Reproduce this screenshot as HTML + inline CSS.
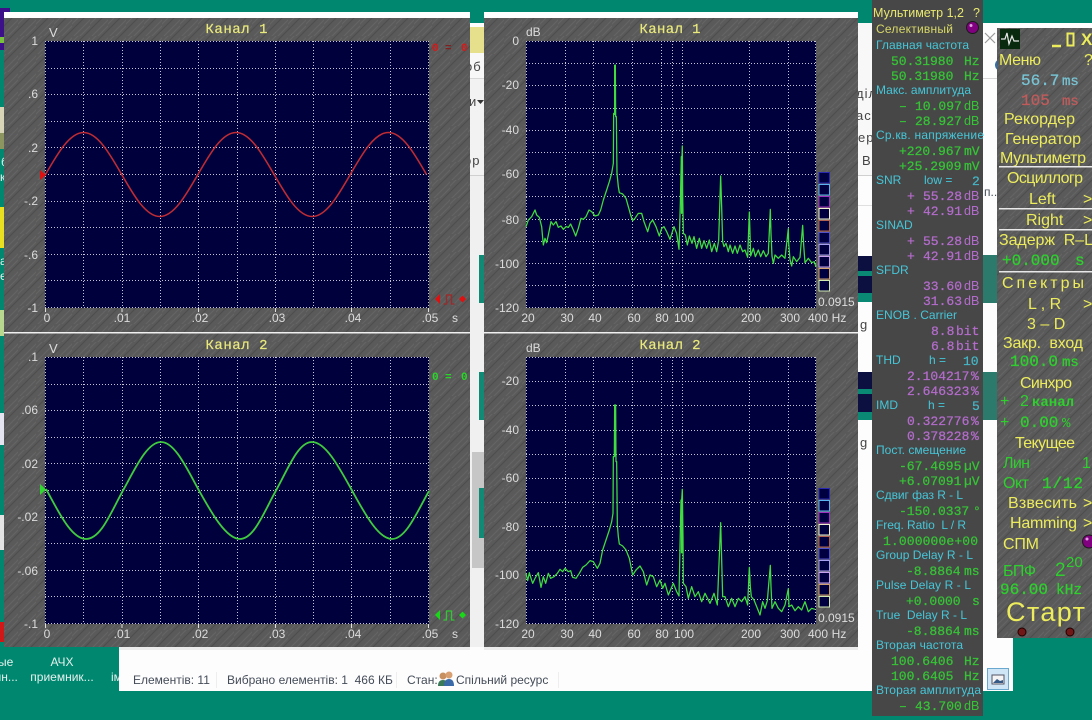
<!DOCTYPE html>
<html><head><meta charset="utf-8"><style>
html,body{margin:0;padding:0;background:#00876f;width:1092px;height:720px;overflow:hidden}
svg{display:block}
text{font-family:"Liberation Sans","DejaVu Sans",sans-serif;white-space:pre}
.m{font-family:"Liberation Mono",monospace}
.ax{font-size:12px;fill:#dcdcdc}
.tt{font-family:"Liberation Mono",monospace;font-size:14px;fill:#eaea7c;stroke:#eaea7c;stroke-width:.2}
.l{font-size:12px;fill:#45c6d8}
.g{font-family:"Liberation Mono",monospace;font-size:13px;fill:#36c436;stroke:#36c436;stroke-width:.25}
.gu{font-size:12.5px;fill:#36c436}
.p{font-family:"Liberation Mono",monospace;font-size:13px;fill:#b46ccc;stroke:#b46ccc;stroke-width:.25}
.pu{font-size:12.5px;fill:#b46ccc}
.c{font-family:"Liberation Mono",monospace;font-size:13px;fill:#45b8c8;stroke:#45b8c8;stroke-width:.2}
.y{font-size:16px;fill:#ecec5c}
.gr{font-size:16px;fill:#2ed02e}
.grm{font-family:"Liberation Mono",monospace;font-size:16px;fill:#2ed02e;stroke:#2ed02e;stroke-width:.3}
.e{font-size:13px;fill:#444}
.s{font-size:12px;fill:#444c58}
.d{font-size:12px;fill:#e4f0ee}
</style></head><body>
<svg width="1092" height="720" viewBox="0 0 1092 720" xmlns="http://www.w3.org/2000/svg">
<defs>
<pattern id="t" width="18" height="18" patternUnits="userSpaceOnUse">
<rect width="18" height="18" fill="#5a5a5a"/>
<path d="M-2 8L8 -2M0 20L20 0M5 21L21 5" stroke="#656565" stroke-width="1"/>
<path d="M-2 14L14 -2M10 20L20 10" stroke="#4e4e4e" stroke-width="1.200"/>
</pattern>
<g id="tg" fill="none" stroke="#c4c4d4" stroke-width="1" stroke-dasharray="1 2">
<path d="M83.500 41V308M122.500 41V308M160.500 41V308M198.500 41V308M237.500 41V308M275.500 41V308M313.500 41V308M351.500 41V308M390.500 41V308M45.500 41V308M428.500 41V308"/>
<path d="M45 41.500H429M45 68.500H429M45 94.500H429M45 121.500H429M45 147.500H429M45 174.500H429M45 201.500H429M45 227.500H429M45 254.500H429M45 280.500H429M45 307.500H429"/>
</g>
<g id="fv" fill="none" stroke="#c4c4d4" stroke-width="1" stroke-dasharray="1 2">
<path d="M526.500 0V267M565.500 0V267M593.500 0V267M632.500 0V267M661.500 0V267M672.500 0V267M682.500 0V267M749.500 0V267M788.500 0V267M815.500 0V267"/>
</g>
<g id="sw" fill="#000040" stroke-width="1">
<rect x="819" y="0" width="10.500" height="10.500" stroke="#2828b0"/>
<rect x="819" y="12" width="10.500" height="10.500" stroke="#5ab4f0"/>
<rect x="819" y="24" width="10.500" height="10.500" stroke="#a030c0"/>
<rect x="819" y="36" width="10.500" height="10.500" stroke="#f0f0d0"/>
<rect x="819" y="48" width="10.500" height="10.500" stroke="#b06050"/>
<rect x="819" y="60" width="10.500" height="10.500" stroke="#5050c8"/>
<rect x="819" y="72" width="10.500" height="10.500" stroke="#a8a0f0"/>
<rect x="819" y="84" width="10.500" height="10.500" stroke="#c8a0f0"/>
<rect x="819" y="96" width="10.500" height="10.500" stroke="#d0a070"/>
<rect x="819" y="108" width="10.500" height="10.500" stroke="#d0e8b0"/>
</g>
</defs>

<!-- desktop -->
<rect width="1092" height="720" fill="#00876f"/>
<rect x="0" y="8" width="10" height="42" fill="#3c1088"/>
<rect x="0" y="37" width="4" height="6" fill="#7ac040"/>
<rect x="0" y="107" width="4" height="26" fill="#d8d4b8"/>
<rect x="0" y="133" width="4" height="16" fill="#8c9460"/>
<rect x="0" y="207" width="4" height="41" fill="#e8e020"/>
<rect x="0" y="310" width="4" height="26" fill="#b8d890"/>
<rect x="0" y="413" width="4" height="32" fill="#e4e4f0"/>
<rect x="0" y="515" width="4" height="35" fill="#e4e4e4"/>
<rect x="0" y="622" width="4" height="20" fill="#d01818"/>
<text class="d" x="1" y="166">б</text>
<text class="d" x="0" y="181">к</text>
<text class="d" x="0" y="265">а</text>
<text class="d" x="0" y="280">ет</text>
<text class="d" x="-2" y="666">ые</text>
<text class="d" x="-5" y="681">чн...</text>
<text class="d" x="62" y="666" text-anchor="middle">АЧХ</text>
<text class="d" x="62" y="681" text-anchor="middle">приемник...</text>
<text class="d" x="111" y="681">ім</text>

<!-- explorer window -->
<rect x="119" y="23" width="894" height="668" fill="#fdfdfd"/>
<rect x="466" y="27" width="20" height="26" fill="#e6e08c"/>
<rect x="466" y="53" width="20" height="25" fill="#f8f8f8"/>
<rect x="466" y="78" width="420" height="1" fill="#d8d8d8"/>
<rect x="466" y="79" width="20" height="98" fill="#f2f2f2"/>
<rect x="856" y="23" width="20" height="152" fill="#f8f8f8"/>
<rect x="466" y="175" width="420" height="1" fill="#d0d0d0"/>
<rect x="466" y="205" width="420" height="1" fill="#e0e0e0"/>
<rect x="466" y="176" width="20" height="471" fill="#f0f0f0"/>
<rect x="472" y="452" width="14" height="116" fill="#c6c6c6"/>
<text class="e" x="465" y="71" style="font-size:13px;letter-spacing:1px">об</text>
<text class="e" x="469" y="106">и</text>
<path d="M477 100h7l-3.500 4z" fill="#333"/>
<text class="e" x="464" y="165" style="letter-spacing:1px">ор</text>
<text class="e" x="856" y="98" style="letter-spacing:1px">діл</text>
<text class="e" x="856" y="120" style="letter-spacing:1px">асу</text>
<text class="e" x="858" y="142" style="letter-spacing:1px">ер</text>
<text class="e" x="862" y="165" style="letter-spacing:1px">Ви</text>
<text class="e" x="860" y="329">g</text>
<text class="e" x="860" y="447">g</text>
<rect x="479" y="255" width="6" height="48" fill="#108a74"/>
<rect x="479" y="372" width="6" height="48" fill="#108a74"/>
<rect x="479" y="488" width="6" height="50" fill="#108a74"/>
<rect x="858" y="256" width="14" height="46" fill="#0a8a74"/>
<rect x="858" y="256" width="14" height="15" fill="#0c1040"/>
<rect x="858" y="276" width="14" height="17" fill="#0c1040"/>
<rect x="858" y="372" width="14" height="48" fill="#0a8a74"/>
<rect x="858" y="372" width="14" height="17" fill="#0c1040"/>
<rect x="858" y="394" width="14" height="18" fill="#0c1040"/>
<rect x="982" y="255" width="16" height="48" fill="#2c7a6c"/>
<rect x="982" y="372" width="16" height="48" fill="#2c7a6c"/>
<rect x="983" y="78" width="16" height="1" fill="#d8d8d8"/>
<path d="M985 33L995 43M995 33L985 43" stroke="#9a9a9a" stroke-width="1.200"/>
<circle cx="1001" cy="65" r="6" fill="#2a70b8"/>
<text class="s" x="984" y="196">п...</text>
<rect x="119" y="647" width="351" height="3" fill="#ececec"/>
<rect x="484" y="647" width="374" height="3" fill="#ececec"/>
<!-- status bar -->
<text class="s" x="133" y="684">Елементів: 11</text>
<text class="s" x="227" y="684">Вибрано елементів: 1  466 КБ</text>
<text class="s" x="407" y="684">Стан:</text>
<circle cx="443" cy="676" r="3.500" fill="#c89060"/>
<path d="M438 686q0-6 5-6t5 6z" fill="#3a7a58"/>
<circle cx="449" cy="675" r="3.500" fill="#d8a070"/>
<path d="M444 686q0-7 5-7t5 7z" fill="#3a6aa8"/>
<text class="s" x="456" y="684">Спільний ресурс</text>
<rect x="216" y="672" width="1" height="16" fill="#eee"/>
<rect x="396" y="672" width="1" height="16" fill="#eee"/>
<rect x="558" y="672" width="1" height="16" fill="#eee"/>
<rect x="987.500" y="668.500" width="21" height="21" fill="#cfe6f6" stroke="#6aa8d0"/>
<rect x="992" y="675" width="12" height="9" fill="#f4f4f4" stroke="#556"/>
<path d="M993 683l4-4 3 2 3-1v3z" fill="#345a88"/>

<!-- scope left windows -->
<rect x="4" y="12" width="466" height="6" fill="#fff"/>
<rect x="4" y="18" width="466" height="629" fill="url(#t)"/>
<rect x="4" y="332" width="466" height="1.500" fill="#f0f0f0"/>
<rect x="45" y="41" width="384" height="267" fill="#00003c"/>
<rect x="45" y="357" width="384" height="267" fill="#00003c"/>
<use href="#tg"/>
<use href="#tg" y="316"/>
<text class="tt" x="205.500" y="33" textLength="62">Канал 1</text>
<text class="tt" x="205.500" y="349" textLength="62">Канал 2</text>
<path d="M45.500 174.500c12.400-21.500 24.300-42 38.100-42s25.700 20.500 38.100 42 24.300 42 38.100 42 25.700-20.500 38.100-42 24.300-42 38.100-42 25.700 20.500 38.100 42 24.300 42 38.100 42 25.700-20.500 38.100-42 24.300-42 38.100-42 25.700 20.500 38.100 42" fill="none" stroke="#c02c34" stroke-width="1.600"/>
<path d="M46 489c12 21.500 25 50 40 50s25-27 37-48.500 24-48.500 38-48.500 26 27 38 48.500 27 48.500 41 48.500 24-27 36-48.500 22-48.500 36-48.500 28 27 40 48.500 26 48.500 40 48.500 25-27 37-48" fill="none" stroke="#40cc40" stroke-width="1.800"/>
<path d="M40 170l6 5-6 5z" fill="#e01010"/>
<path d="M40 484l6 5.500-6 5.500z" fill="#30d830"/>
<g class="ax">
<text class="ax" x="49" y="37" style="font-size:13px">V</text>
<text class="ax" x="49" y="353" style="font-size:13px">V</text>
<g text-anchor="end">
<text class="ax" x="38" y="45">1</text><text class="ax" x="38" y="98">.6</text><text class="ax" x="38" y="152">.2</text><text class="ax" x="38" y="205">-.2</text><text class="ax" x="38" y="259">-.6</text><text class="ax" x="38" y="312">-1</text>
<text class="ax" x="38" y="361">.1</text><text class="ax" x="38" y="414">.06</text><text class="ax" x="38" y="468">.02</text><text class="ax" x="38" y="521">-.02</text><text class="ax" x="38" y="575">-.06</text><text class="ax" x="38" y="628">-.1</text>
</g>
<g text-anchor="middle">
<text class="ax" x="47" y="322">0</text><text class="ax" x="122" y="322">.01</text><text class="ax" x="200" y="322">.02</text><text class="ax" x="277" y="322">.03</text><text class="ax" x="353" y="322">.04</text><text class="ax" x="430" y="322">.05</text><text class="ax" x="455" y="322">s</text>
<text class="ax" x="47" y="638">0</text><text class="ax" x="122" y="638">.01</text><text class="ax" x="200" y="638">.02</text><text class="ax" x="277" y="638">.03</text><text class="ax" x="353" y="638">.04</text><text class="ax" x="430" y="638">.05</text><text class="ax" x="455" y="638">s</text>
</g></g>
<path d="M45.500 308v4M122 308v4M198.500 308v4M275.500 308v4M351.500 308v4M428.500 308v4M45.500 624v4M122 624v4M198.500 624v4M275.500 624v4M351.500 624v4M428.500 624v4" stroke="#ddd"/>
<!-- red/green markers -->
<text class="m" x="432" y="51" fill="#d81818" style="font-size:11px;font-weight:bold">0</text><text class="m" x="445" y="51" fill="#802020" style="font-size:11px;font-weight:bold">=</text><text class="m" x="461" y="51" fill="#d81818" style="font-size:11px;font-weight:bold">0</text>
<text class="m" x="432" y="380" fill="#28d828" style="font-size:11px;font-weight:bold">0</text><text class="m" x="445" y="380" fill="#28d828" style="font-size:11px;font-weight:bold">=</text><text class="m" x="461" y="380" fill="#28d828" style="font-size:11px;font-weight:bold">0</text>
<g fill="#e01010"><path d="M435 299l5-5v10z"/><path d="M459 299l3.500-3.500 3.500 3.500-3.500 3.500z"/></g>
<path d="M443.500 304h3v-9h5v9h3" fill="none" stroke="#a02828" stroke-width="1.300"/>
<g fill="#18d818"><path d="M435 615l5-5v10z"/><path d="M459 615l3.500-3.500 3.500 3.500-3.500 3.500z"/></g>
<path d="M443.500 620h3v-9h5v9h3" fill="none" stroke="#30c830" stroke-width="1.300"/>

<!-- spectrum windows -->
<rect x="484" y="12" width="374" height="6" fill="#fff"/>
<rect x="484" y="18" width="374" height="629" fill="url(#t)"/>
<rect x="484" y="332" width="374" height="1.500" fill="#f0f0f0"/>
<rect x="526" y="41" width="290" height="267" fill="#00003c"/>
<rect x="526" y="357" width="290" height="267" fill="#00003c"/>
<use href="#fv" y="41"/>
<use href="#fv" y="357"/>
<path d="M526 63.500H816M526 85.500H816M526 108.500H816M526 130.500H816M526 152.500H816M526 174.500H816M526 196.500H816M526 219.500H816M526 241.500H816M526 263.500H816M526 285.500H816M526 41.500H816M526 307.500H816" fill="none" stroke="#c4c4d4" stroke-dasharray="1 2"/>
<path d="M526 357.500H816M526 381.500H816M526 405.500H816M526 430.500H816M526 454.500H816M526 478.500H816M526 502.500H816M526 526.500H816M526 550.500H816M526 575.500H816M526 599.500H816M526 623.500H816" fill="none" stroke="#c4c4d4" stroke-dasharray="1 2"/>
<text class="tt" x="639.500" y="33" textLength="61">Канал 1</text>
<text class="tt" x="639.500" y="349" textLength="61">Канал 2</text>
<text class="ax" x="526" y="36">dB</text>
<text class="ax" x="526" y="352">dB</text>
<g text-anchor="end">
<text class="ax" x="519" y="45">0</text><text class="ax" x="519" y="89">-20</text><text class="ax" x="519" y="134">-40</text><text class="ax" x="519" y="178">-60</text><text class="ax" x="519" y="224">-80</text><text class="ax" x="519" y="268">-100</text><text class="ax" x="519" y="312">-120</text>
<text class="ax" x="519" y="385">-20</text><text class="ax" x="519" y="434">-40</text><text class="ax" x="519" y="482">-60</text><text class="ax" x="519" y="531">-80</text><text class="ax" x="519" y="579">-100</text><text class="ax" x="519" y="628">-120</text>
</g>
<g text-anchor="middle">
<text class="ax" x="528" y="322">20</text><text class="ax" x="567" y="322">30</text><text class="ax" x="595" y="322">40</text><text class="ax" x="634" y="322">60</text><text class="ax" x="662" y="322">80</text><text class="ax" x="684" y="322">100</text><text class="ax" x="751" y="322">200</text><text class="ax" x="790" y="322">300</text><text class="ax" x="818" y="322">400</text><text class="ax" x="839" y="322">Hz</text>
<text class="ax" x="528" y="638">20</text><text class="ax" x="567" y="638">30</text><text class="ax" x="595" y="638">40</text><text class="ax" x="634" y="638">60</text><text class="ax" x="662" y="638">80</text><text class="ax" x="684" y="638">100</text><text class="ax" x="751" y="638">200</text><text class="ax" x="790" y="638">300</text><text class="ax" x="818" y="638">400</text><text class="ax" x="839" y="638">Hz</text>
</g>
<text class="ax" x="818" y="306">0.0915</text>
<text class="ax" x="818" y="622">0.0915</text>
<use href="#sw" y="172.500"/>
<use href="#sw" y="488.500"/>

<g transform="translate(480,0) scale(.33333)" fill="none" stroke="#40dc40" stroke-width="3.800" stroke-linejoin="round">
<polyline points="138,680 145,660 155,650 165,630 170,645 178,652 185,680 190,735 195,715 200,728 205,705 213,665 220,675 228,665 235,682 243,678 250,688 258,680 265,682 272,672 280,690 287,708 295,685 303,655 310,658 318,650 327,630 335,635 345,648 355,645 362,630 370,600 380,570 388,545 395,520 400,490 401,340 404,340 405,195 406,195 407,350 409,350 411,520 415,560 418,578 428,582 438,595 445,620 452,645 458,662 465,655 475,640 485,640 492,665 503,695 510,670 518,660 528,680 538,708 545,685 552,680 560,695 570,718 582,680 590,700 597,748 601,610 604,470 605,640 606,470 607,438 608,580 610,700 616,705 622,735 628,708 636,730 642,710 650,745 658,715 665,745 672,722 680,745 688,720 695,755 703,730 710,755 716,722 722,528 725,622 728,725 732,740 738,730 745,755 750,735 758,760 765,738 772,760 780,735 788,755 795,750 803,772 808,636 810,700 812,768 820,745 826,770 835,750 842,770 850,752 858,770 865,760 871,628 873,700 876,768 880,790 885,765 895,775 905,765 915,775 925,686 926,730 930,778 935,798 940,770 950,785 960,772 968,676 971,735 975,788 985,775 995,788 1003,785 1008,800"/>
<path d="M405 195V345" stroke-width="6"/>
<path d="M605 470V640" stroke-width="5"/>
</g>
<g transform="translate(480,330) scale(.33333)" fill="none" stroke="#40dc40" stroke-width="3.800" stroke-linejoin="round">
<polyline points="138,730 143,752 148,728 153,745 158,760 165,745 175,728 183,772 190,740 197,760 205,730 212,745 222,740 232,730 240,718 248,725 255,715 265,725 272,722 278,742 288,745 298,730 308,712 318,705 330,692 340,695 352,715 360,700 368,660 378,630 388,600 395,575 399,550 400,380 403,380 404,225 407,225 408,395 410,395 412,585 415,620 418,642 428,648 438,660 448,685 458,735 468,720 480,708 490,725 500,765 510,735 520,740 530,770 540,750 548,775 555,760 565,795 580,760 590,785 597,798 600,650 603,510 605,510 607,478 609,620 610,760 618,770 625,805 635,770 645,800 655,785 665,815 675,790 690,820 702,790 712,825 722,578 725,690 728,800 735,800 745,830 755,805 765,830 775,805 785,815 795,800 803,825 808,712 811,770 814,800 822,810 830,830 840,855 848,815 855,835 862,812 871,706 873,770 876,835 885,815 895,835 905,845 915,825 925,776 927,830 935,825 945,842 955,830 965,840 975,815 985,845 995,835 1005,838"/>
<path d="M405 225V380" stroke-width="6"/>
<path d="M605 510V670" stroke-width="5"/>
</g>

<!-- multimeter panel -->
<rect x="872" y="0" width="111" height="716" fill="#474747"/>
<text x="873" y="17" style="font-size:12.500px;fill:#e8e870" textLength="91">Мультиметр 1,2</text>
<text x="973" y="17" style="font-size:12.500px;fill:#e8e870">?</text>
<text x="876" y="33" style="font-size:12px;fill:#d8d868" textLength="77">Селективный</text>
<circle cx="972.500" cy="27.500" r="6" fill="#800080" stroke="#1a1a1a"/>
<circle cx="971" cy="25.500" r="1.500" fill="#e0a0e0"/>

<text class="l" x="876" y="49" textLength="93">Главная частота</text>
<text class="g" x="891" y="65">50.31980</text><text class="g" x="964" y="65">Hz</text>
<text class="g" x="891" y="80">50.31980</text><text class="g" x="964" y="80">Hz</text>
<text class="l" x="876" y="94" textLength="95">Макс. амплитуда</text>
<text class="g" x="899" y="110">–</text><text class="g" x="915" y="110">10.097</text><text class="gu" x="964" y="110">dB</text>
<text class="g" x="899" y="125">–</text><text class="g" x="915" y="125">28.927</text><text class="gu" x="964" y="125">dB</text>
<text class="l" x="876" y="139" textLength="108">Ср.кв. напряжение</text>
<text class="g" x="899" y="155">+220.967</text><text class="g" x="964" y="155">mV</text>
<text class="g" x="899" y="170">+25.2909</text><text class="g" x="964" y="170">mV</text>
<text class="l" x="876" y="184">SNR</text><text class="l" x="924" y="184">low =</text><text class="c" x="972" y="185">2</text>
<text class="p" x="907" y="200">+</text><text class="p" x="923" y="200">55.28</text><text class="pu" x="964" y="200">dB</text>
<text class="p" x="907" y="215">+</text><text class="p" x="923" y="215">42.91</text><text class="pu" x="964" y="215">dB</text>
<text class="l" x="876" y="229">SINAD</text>
<text class="p" x="907" y="245">+</text><text class="p" x="923" y="245">55.28</text><text class="pu" x="964" y="245">dB</text>
<text class="p" x="907" y="260">+</text><text class="p" x="923" y="260">42.91</text><text class="pu" x="964" y="260">dB</text>
<text class="l" x="876" y="274">SFDR</text>
<text class="p" x="923" y="290">33.60</text><text class="pu" x="964" y="290">dB</text>
<text class="p" x="923" y="305">31.63</text><text class="pu" x="964" y="305">dB</text>
<text class="l" x="876" y="319" textLength="81">ENOB . Carrier</text>
<text class="p" x="931" y="335">8.8</text><text class="p" x="956" y="335">bit</text>
<text class="p" x="931" y="350">6.8</text><text class="p" x="956" y="350">bit</text>
<text class="l" x="876" y="364">THD</text><text class="l" x="929" y="364">h =</text><text class="c" x="963" y="365">10</text>
<text class="p" x="907" y="380">2.104217</text><text class="p" x="971" y="380">%</text>
<text class="p" x="907" y="395">2.646323</text><text class="p" x="971" y="395">%</text>
<text class="l" x="876" y="409">IMD</text><text class="l" x="928" y="409">h =</text><text class="c" x="972" y="410">5</text>
<text class="p" x="907" y="425">0.322776</text><text class="p" x="971" y="425">%</text>
<text class="p" x="907" y="440">0.378228</text><text class="p" x="971" y="440">%</text>
<text class="l" x="876" y="454" textLength="90">Пост. смещение</text>
<text class="g" x="899" y="470">-67.4695</text><text class="g" x="964" y="470">µV</text>
<text class="g" x="899" y="485">+6.07091</text><text class="g" x="964" y="485">µV</text>
<text class="l" x="876" y="499" textLength="87">Сдвиг фаз R - L</text>
<text class="g" x="899" y="515">-150.0337</text><text class="g" x="973" y="515">°</text>
<text class="l" x="876" y="529" textLength="90">Freq. Ratio  L / R</text>
<text class="g" x="883" y="545" textLength="95">1.000000e+00</text>
<text class="l" x="876" y="559" textLength="97">Group Delay R - L</text>
<text class="g" x="906" y="575">-8.8864</text><text class="g" x="964" y="575">ms</text>
<text class="l" x="876" y="589" textLength="95">Pulse Delay R - L</text>
<text class="g" x="906" y="605">+0.0000</text><text class="g" x="972" y="605">s</text>
<text class="l" x="876" y="619" textLength="91">True  Delay R - L</text>
<text class="g" x="906" y="635">-8.8864</text><text class="g" x="964" y="635">ms</text>
<text class="l" x="876" y="649" textLength="87">Вторая частота</text>
<text class="g" x="891" y="665">100.6406</text><text class="g" x="964" y="665">Hz</text>
<text class="g" x="891" y="680">100.6405</text><text class="g" x="964" y="680">Hz</text>
<text class="l" x="876" y="694" textLength="105">Вторая амплитуда</text>
<text class="g" x="899" y="710">–</text><text class="g" x="915" y="710">43.700</text><text class="gu" x="964" y="710">dB</text>

<!-- control panel -->
<rect x="997" y="23" width="95" height="5" fill="#fff"/>
<rect x="997" y="28" width="95" height="610" fill="url(#t)"/>
<rect x="1000" y="29" width="20" height="20" fill="#0a2a10"/>
<path d="M1001 39h4l2-6 2 11 3-8 2 5h5" fill="none" stroke="#e8e8e8" stroke-width="1.200"/>
<path d="M1052 46h9" stroke="#ecec5c" stroke-width="2.500"/>
<rect x="1067.500" y="33.500" width="6" height="12" fill="none" stroke="#ecec5c" stroke-width="2"/>
<text x="1081" y="45" style="font-size:17px;font-weight:bold;fill:#ecec5c">X</text>
<text class="y" x="999" y="65" textLength="42">Меню</text><text class="y" x="1084" y="65">?</text>
<text class="m" x="1021" y="85" style="font-size:16px;fill:#78c4d4;stroke:#78c4d4;stroke-width:.3">56.7</text><text class="m" x="1062" y="85" style="font-size:14px;fill:#78c4d4;stroke:#78c4d4;stroke-width:.3">ms</text>
<text class="m" x="1021" y="105" style="font-size:16px;fill:#c05c5c;stroke:#c05c5c;stroke-width:.3">105</text><text class="m" x="1062" y="105" style="font-size:14px;fill:#c05c5c;stroke:#c05c5c;stroke-width:.3">ms</text>
<text class="y" x="1004" y="124" textLength="71">Рекордер</text>
<text class="y" x="1005" y="144" textLength="76">Генератор</text>
<text class="y" x="1000" y="163" textLength="86">Мультиметр</text>
<rect x="999" y="166" width="93" height="1.500" fill="#e8e8e8"/>
<text class="y" x="1007" y="183" textLength="76">Осциллогр</text>
<text class="y" x="1029" y="204">Left</text><text class="y" x="1083" y="204">&gt;</text>
<rect x="999" y="208" width="93" height="1.500" fill="#e8e8e8"/>
<text class="y" x="1026" y="225">Right</text><text class="y" x="1083" y="225">&gt;</text>
<rect x="999" y="229" width="93" height="1.500" fill="#e8e8e8"/>
<text class="y" x="999" y="245" textLength="94">Задерж  R–L</text>
<text class="grm" x="1002" y="265">+0.000</text><text class="grm" x="1075" y="265">s</text>
<rect x="999" y="271" width="93" height="1.500" fill="#e8e8e8"/>
<text class="y" x="1002" y="288" style="letter-spacing:3px">Спектры</text>
<text class="y" x="1028" y="309">L , R</text><text class="y" x="1083" y="309">&gt;</text>
<text class="y" x="1027" y="329">3 – D</text>
<text class="y" x="1003" y="348" textLength="80">Закр.  вход</text>
<text class="grm" x="1010" y="366">100.0</text><text class="m" x="1062" y="366" style="font-size:14px;fill:#2ed02e;stroke:#2ed02e;stroke-width:.3">ms</text>
<text class="y" x="1020" y="388" textLength="52">Синхро</text>
<text class="gr" x="1000" y="406">+</text><text class="gr" x="1020" y="406">2</text><text class="m" x="1032" y="406" style="font-size:14px;font-weight:bold;fill:#2ed02e">канал</text>
<text class="gr" x="1000" y="427">+</text><text class="grm" x="1020" y="427">0.00</text><text class="m" x="1062" y="427" style="font-size:14px;fill:#2ed02e">%</text>
<text class="y" x="1015" y="448" textLength="60">Текущее</text>
<text class="gr" x="1003" y="468" textLength="27">Лин</text><text class="gr" x="1082" y="468">1</text>
<text class="gr" x="1003" y="488" textLength="26">Окт</text><text class="grm" x="1042" y="488" textLength="41">1/12</text>
<text class="y" x="1008" y="508" textLength="69">Взвесить</text><text class="y" x="1083" y="508">&gt;</text>
<text class="y" x="1010" y="528" textLength="67">Hamming</text><text class="y" x="1083" y="528">&gt;</text>
<text class="y" x="1003" y="549" textLength="36">СПМ</text>
<circle cx="1089" cy="541.500" r="6.500" fill="#800080" stroke="#1a1a1a"/>
<circle cx="1087" cy="539" r="1.500" fill="#e0a0e0"/>
<text class="gr" x="1003" y="576" textLength="33">БПФ</text>
<text x="1055" y="576" style="font-size:19px;fill:#2ed02e">2</text>
<text x="1066" y="567" style="font-size:15px;fill:#2ed02e">20</text>
<text class="grm" x="1000" y="594">96.00</text><text class="m" x="1056" y="594" style="font-size:14.500px;fill:#2ed02e;stroke:#2ed02e;stroke-width:.3">kHz</text>
<text x="1006" y="621" style="font-size:27px;fill:#ecec5c" textLength="79">Старт</text>
<circle cx="1022" cy="632" r="4" fill="#701818" stroke="#200000"/>
<circle cx="1070" cy="632" r="4" fill="#701818" stroke="#200000"/>
</svg>
</body></html>
